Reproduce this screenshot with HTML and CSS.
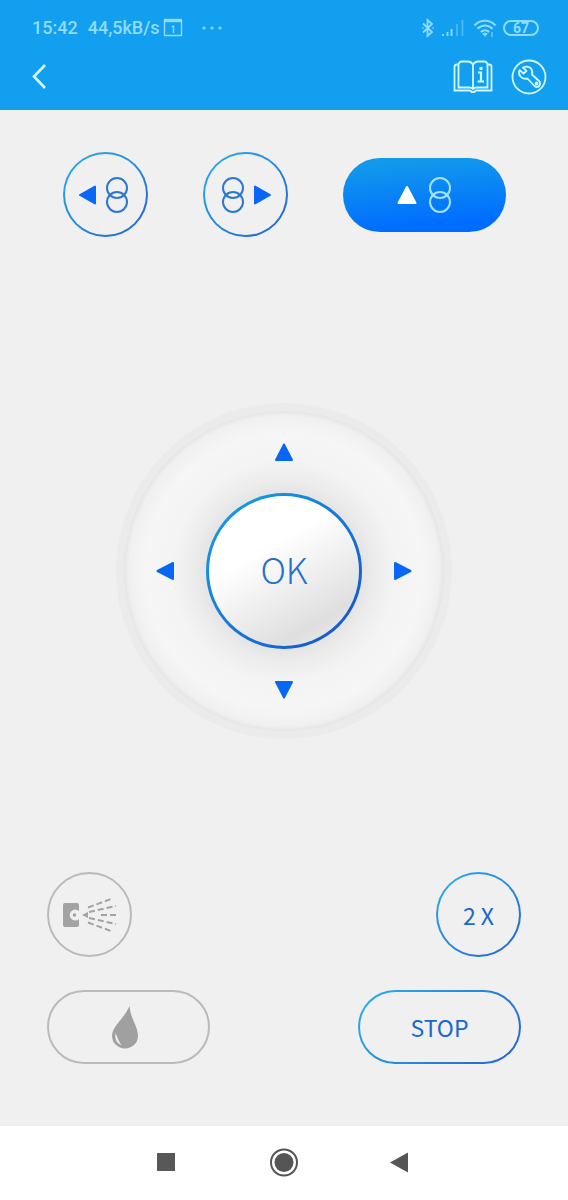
FILE: index.html
```html
<!DOCTYPE html>
<html lang="en">
<head>
<meta charset="utf-8">
<meta name="viewport" content="width=device-width, initial-scale=1">
<title>Remote control</title>
<link rel="stylesheet" href="styles.css">
</head>
<body>
<div class="app">
  <header class="header">
    <div class="status">
      <div class="status-group">
        <span>15:42</span>
        <span class="speed">44,5kB/s
          <svg width="20" height="20" viewBox="0 0 20 20" fill="none" stroke="currentColor"><path d="M1.500 2v15.500h17V2" stroke-width="1.400"/><path d="M1 2.500h18" stroke-width="3.400"/><path d="M8.500 9l2-1v7" stroke-width="1.300"/></svg>
        </span>
        <svg class="dots" width="22" height="6" viewBox="0 0 22 6" fill="currentColor"><circle cx="3" cy="3" r="1.500"/><circle cx="11" cy="3" r="1.500"/><circle cx="19" cy="3" r="1.500"/></svg>
      </div>
      <div class="status-group status-icons">
        <svg width="14" height="20" viewBox="0 0 14 20" fill="none" stroke="currentColor" stroke-width="1.800"><path d="M2 5.500l9 8.500-4.500 4V2L11 6 2 14.500"/><path d="M1.500 10h1M11.500 10h1" stroke-width="2"/></svg>
        <svg width="24" height="20" viewBox="0 0 24 20" fill="none" stroke="currentColor" stroke-width="1.800"><path d="M2 18v-2M6.500 18v-4M10.500 18V11"/><path d="M16 18V6M21.500 18V2" opacity=".45"/></svg>
        <svg class="wifi" width="24" height="20" viewBox="0 0 24 20" fill="none" stroke="currentColor" stroke-width="2"><path d="M1.500 7.500c6-6.300 15-6.300 21 0M4.500 10.800c4.500-4.500 10.500-4.500 15 0M7.800 14c2.500-2.500 5.900-2.500 8.400 0"/><path d="M9.800 15.800L12 18.200l2.200-2.400q-2.200-1.500-4.400 0zM19 14v5" fill="currentColor" stroke-width="1"/></svg>
        <span class="battery">67</span>
      </div>
    </div>
    <nav class="toolbar" aria-label="Main">
      <button class="tool" type="button" aria-label="Back"><svg width="18" height="28" viewBox="0 0 18 28" fill="none" stroke="currentColor" stroke-width="2.600"><path d="M13 2L2 13.500l11 11.500"/></svg></button>
      <div class="tools">
        <button class="tool" type="button" aria-label="Manual"><svg width="40" height="36" viewBox="0 0 40 36" fill="none" stroke="currentColor" stroke-width="1.800"><path d="M20 5.500Q18 2.500 15 2.500H9Q6 2.500 5.500 5.500V28.500H16Q19 28.500 20 30Q21 28.500 24 28.500H34.500V5.500Q34 2.500 31 2.500H25Q22 2.500 20 5.500V30"/><path d="M5.500 5.500H4Q1.500 5.500 1.500 8V31.500H16.500Q18 31.500 18.500 33H21.500Q22 31.500 23.500 31.500H38.500V8Q38.500 5.500 36 5.500H34.500"/><path d="M25 13.500H28V22.500M24.500 22.500H31" stroke-width="2.200"/><path d="M26.500 9.500H29.500" stroke-width="3"/></svg></button>
        <button class="tool" type="button" aria-label="Settings"><svg width="36" height="36" viewBox="0 0 36 36" fill="none" stroke="currentColor" stroke-width="1.800" stroke-linejoin="round"><circle cx="18" cy="18" r="16.500"/><path d="M12 8.500Q17 6.500 20 9.500Q22 12 21 15.500L28.500 22.500Q30 25 28 27Q26 29 23.500 27L16.500 19.500Q12 20.500 9.500 17.500Q7 14.500 8.500 11L12.500 14.500L15.500 12Z"/><circle cx="25.500" cy="24.500" r="1"/></svg></button>
      </div>
    </nav>
  </header>

  <main class="remote">
    <section class="row" aria-label="Rollers">
      <button class="key round" type="button" aria-label="Left roller"><svg width="56" height="40" viewBox="0 0 56 40"><path class="arrow" d="M3 20L18 11.500V28.500Z"/><g class="rings"><circle cx="40" cy="13" r="10"/><circle cx="40" cy="27" r="10"/></g></svg></button>
      <button class="key round" type="button" aria-label="Right roller"><svg width="56" height="40" viewBox="0 0 56 40"><g class="rings"><circle cx="16" cy="13" r="10"/><circle cx="16" cy="27" r="10"/></g><path class="arrow" d="M53 20L38 11.500V28.500Z"/></svg></button>
      <button class="key pill active" type="button" aria-label="Both rollers"><svg width="62" height="40" viewBox="0 0 62 40"><path class="arrow" d="M14 12L22.500 28H5.500Z"/><g class="rings"><circle cx="47" cy="13" r="10"/><circle cx="47" cy="27" r="10"/></g></svg></button>
    </section>

    <section class="stage" aria-label="Direction">
      <div class="dial">
        <button class="step up" type="button" aria-label="Up"><svg width="22" height="22" viewBox="0 0 22 22"><path class="arrow" d="M11 3.500L19 19H3Z"/></svg></button>
        <button class="step left" type="button" aria-label="Left"><svg width="22" height="22" viewBox="0 0 22 22"><path class="arrow" d="M3.500 11L19 3V19Z"/></svg></button>
        <button class="ok" type="button">OK</button>
        <button class="step right" type="button" aria-label="Right"><svg width="22" height="22" viewBox="0 0 22 22"><path class="arrow" d="M18.500 11L3 3V19Z"/></svg></button>
        <button class="step down" type="button" aria-label="Down"><svg width="22" height="22" viewBox="0 0 22 22"><path class="arrow" d="M11 18.500L3 3H19Z"/></svg></button>
      </div>
    </section>

    <section class="actions" aria-label="Actions">
      <div class="column">
        <button class="key round muted" type="button" aria-label="Spray"><svg width="56" height="40" viewBox="0 0 56 40" fill="none" stroke="#a3a3a3" stroke-width="2"><path d="M3 8H15Q17 8 17 10V16A5.500 5.500 0 1 0 17 24V30Q17 32 15 32H3Q1 32 1 30V10Q1 8 3 8Z" fill="#a3a3a3" stroke="none"/><circle cx="12.500" cy="20" r="1.800" fill="#a3a3a3" stroke="none"/><path d="M20 20l6-3v6z" fill="#a3a3a3" stroke="none"/><path d="M26 12.500L49 4M27 17L54 11M39 20H56M27 23L54 29M26 27.500L49 36" stroke-dasharray="6 3"/></svg></button>
        <button class="key pill muted" type="button" aria-label="Water"><svg width="36" height="46" viewBox="0 0 36 46"><path d="M18.500 2C19.500 15 27 22 27 32A13 12.500 0 0 1 1 32C1 22 13 15 18.500 2Z" fill="#a0a0a0"/><path d="M4.500 29Q3 38 10.500 41.500Q7 36 4.500 29Z" fill="#f0f0f0"/></svg></button>
      </div>
      <div class="column end">
        <button class="key round" type="button">2 X</button>
        <button class="key pill" type="button">STOP</button>
      </div>
    </section>
  </main>

  <nav class="system" aria-label="System">
    <button class="tool" type="button" aria-label="Recent apps"><svg width="30" height="30" viewBox="0 0 30 30"><path d="M6 5H24V23H6Z" fill="#585858"/></svg></button>
    <button class="tool" type="button" aria-label="Home"><svg width="30" height="30" viewBox="0 0 30 30"><circle cx="15" cy="14.500" r="13" fill="none" stroke="#555" stroke-width="2"/><circle cx="15" cy="14.500" r="9.500" fill="#555"/></svg></button>
    <button class="tool" type="button" aria-label="Back to previous app"><svg width="30" height="30" viewBox="0 0 30 30"><path d="M3 14.500L21 4.500V24.500Z" fill="#555"/></svg></button>
  </nav>
</div>
</body>
</html>
```
FILE: styles.css
```css
* { box-sizing: border-box; }

body {
  margin: 0;
  background: #f0f0f0;
  font-family: "Noto Sans CJK SC", "Noto Sans", sans-serif;
}

button {
  margin: 0;
  padding: 0;
  border: 0;
  background: none;
  color: inherit;
  font: inherit;
  cursor: pointer;
}

svg { display: block; flex: none; }

.app {
  display: flex;
  flex-direction: column;
  min-height: 100vh;
}

.header {
  padding: 16px 21px 15px 32px;
  background: #139ff0;
  color: #d2f8ff;
}

.status {
  display: flex;
  justify-content: space-between;
  height: 24px;
  padding-right: 8px;
  color: #8fdcff;
  font: 500 18px/24px Roboto, sans-serif;
}

.status-group {
  display: flex;
  align-items: center;
  gap: 10px;
}

.speed {
  display: flex;
  align-items: center;
  gap: 4px;
}

.dots { margin-left: 8px; }

.status-icons { gap: 6px; }

.wifi { margin: 0 0 0 2px; }

.battery {
  width: 36px;
  height: 16px;
  border: 2px solid currentColor;
  border-radius: 8px;
  font-size: 14px;
  font-weight: 700;
  line-height: 12px;
  text-align: center;
}

.toolbar,
.tools {
  display: flex;
  align-items: center;
}

.toolbar {
  justify-content: space-between;
  margin-top: 19px;
}

.tools { gap: 18px; }

.remote {
  display: flex;
  flex: 1;
  flex-direction: column;
  padding: 42px 47px 62px;
}

.row {
  display: flex;
  align-items: center;
  justify-content: center;
  gap: 55px;
}

.key {
  display: flex;
  flex: none;
  align-items: center;
  justify-content: center;
  border: 2px solid transparent;
  background:
    linear-gradient(#f0f0f0, #f0f0f0) padding-box,
    linear-gradient(135deg, #2bb0ea, #2462d0) border-box;
  color: #1a68cc;
  font-size: 23px;
  line-height: 32px;
}

.round {
  width: 85px;
  height: 85px;
  border-radius: 50%;
}

.pill {
  width: 163px;
  height: 74px;
  border-radius: 37px;
}

.arrow {
  fill: #0967f5;
  stroke: #0967f5;
  stroke-width: 2;
  stroke-linejoin: round;
}

.rings {
  fill: none;
  stroke: #2c78cf;
  stroke-width: 2;
}

.active {
  border: 0;
  background: linear-gradient(175deg, #1299ec 10%, #006dff 85%);
}

.active .arrow { fill: #fff; stroke: #fff; }

.active .rings { stroke: #a2e3ff; }

.muted {
  border-color: #bababa;
  background: none;
}

.stage {
  display: flex;
  flex: 1;
  align-items: center;
  justify-content: center;
  padding-top: 33px;
}

.dial {
  display: grid;
  grid-template-areas:
    ". up ."
    "left ok right"
    ". down .";
  grid-template-columns: 1fr auto 1fr;
  grid-template-rows: 1fr auto 1fr;
  width: 336px;
  height: 336px;
  border: 8px solid #ebebeb;
  border-radius: 50%;
  background: radial-gradient(circle closest-side, #e2e2e2 46%, #ececec 57%, #f4f4f4 70%, #f6f6f6 86%, #f0f0f0 97%, #e5e5e5 100%);
}

.step {
  display: grid;
  place-items: center;
}

.up { grid-area: up; }
.left { grid-area: left; }
.right { grid-area: right; }
.down { grid-area: down; }

.ok {
  grid-area: ok;
  width: 156px;
  height: 156px;
  padding-bottom: 4px;
  border: 3px solid transparent;
  border-radius: 50%;
  background:
    linear-gradient(150deg, #fff 36%, #dfdfdf 80%, #f0f0f0 100%) padding-box,
    linear-gradient(135deg, #16a2e6, #1750c8) border-box;
  color: #2470cc;
  font-size: 35px;
  font-weight: 300;
  line-height: 48px;
}

.actions {
  display: flex;
  justify-content: space-between;
}

.column {
  display: flex;
  flex-direction: column;
  gap: 33px;
}

.end { align-items: flex-end; }

.system {
  display: flex;
  align-items: center;
  justify-content: center;
  gap: 88px;
  height: 74px;
  background: #fff;
}
```
